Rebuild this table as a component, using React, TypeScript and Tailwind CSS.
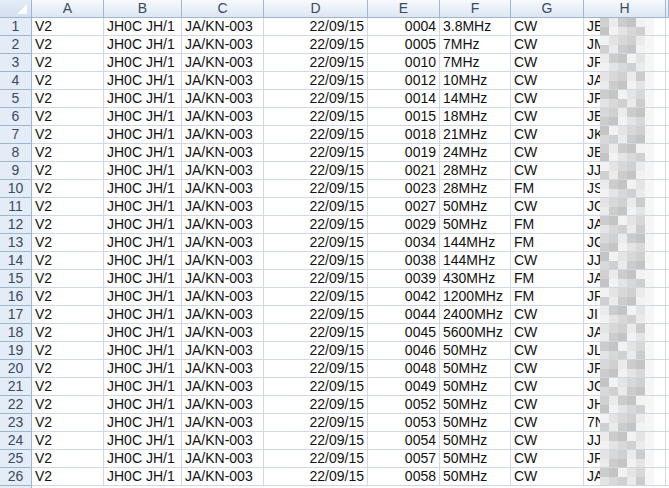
import React from 'react'

type Row = {
  no: string
  freq: string
  mode: string
  call: string
}

const rows: Row[] = [
  { no: '0004', freq: '3.8MHz', mode: 'CW', call: 'JE' },
  { no: '0005', freq: '7MHz', mode: 'CW', call: 'JM' },
  { no: '0010', freq: '7MHz', mode: 'CW', call: 'JR' },
  { no: '0012', freq: '10MHz', mode: 'CW', call: 'JA' },
  { no: '0014', freq: '14MHz', mode: 'CW', call: 'JF' },
  { no: '0015', freq: '18MHz', mode: 'CW', call: 'JE' },
  { no: '0018', freq: '21MHz', mode: 'CW', call: 'JK' },
  { no: '0019', freq: '24MHz', mode: 'CW', call: 'JE' },
  { no: '0021', freq: '28MHz', mode: 'CW', call: 'JJ' },
  { no: '0023', freq: '28MHz', mode: 'FM', call: 'JS' },
  { no: '0027', freq: '50MHz', mode: 'CW', call: 'JG' },
  { no: '0029', freq: '50MHz', mode: 'FM', call: 'JA' },
  { no: '0034', freq: '144MHz', mode: 'FM', call: 'JG' },
  { no: '0038', freq: '144MHz', mode: 'CW', call: 'JJ' },
  { no: '0039', freq: '430MHz', mode: 'FM', call: 'JA' },
  { no: '0042', freq: '1200MHz', mode: 'FM', call: 'JR' },
  { no: '0044', freq: '2400MHz', mode: 'CW', call: 'JI' },
  { no: '0045', freq: '5600MHz', mode: 'CW', call: 'JA' },
  { no: '0046', freq: '50MHz', mode: 'CW', call: 'JL' },
  { no: '0048', freq: '50MHz', mode: 'CW', call: 'JF' },
  { no: '0049', freq: '50MHz', mode: 'CW', call: 'JG' },
  { no: '0052', freq: '50MHz', mode: 'CW', call: 'JH' },
  { no: '0053', freq: '50MHz', mode: 'CW', call: '7N' },
  { no: '0054', freq: '50MHz', mode: 'CW', call: 'JJ' },
  { no: '0057', freq: '50MHz', mode: 'CW', call: 'JR' },
  { no: '0058', freq: '50MHz', mode: 'CW', call: 'JA' },
]

const letters = ['A', 'B', 'C', 'D', 'E', 'F', 'G', 'H', '']

// モザイク部分のグレー濃淡
const shades = ['#d0d0d0', '#e4e4e4', '#c4c4c4', '#ebebeb', '#d8d8d8', '#f2f2f2', '#cccccc']

const cols = 'grid grid-cols-[32px_72px_78px_82px_104px_72px_71px_73px_82px_1fr]'
const cell = 'h-[18px] border-r border-b border-[#d0d7e5] px-[3px] leading-[17px] whitespace-nowrap overflow-hidden text-[#111]'

function Mosaic({ seed }: { seed: number }) {
  return (
    <div className="absolute left-[16px] top-0 flex h-[18px] flex-col">
      {[0, 1].map((r) => (
        <div key={r} className="flex h-[9px]">
          {[0, 1, 2, 3, 4, 5].map((i) => (
            <div
              key={i}
              className="h-full w-[9px]"
              style={{
                backgroundColor: i === 5 ? '#f6f6f6' : shades[(seed * 5 + i * 3 + r * 2) % shades.length],
              }}
            />
          ))}
        </div>
      ))}
    </div>
  )
}

export default function App() {
  return (
    <div className="w-[669px] h-[488px] overflow-hidden bg-white text-[14px] text-black font-['Liberation_Sans','Noto_Sans_CJK_JP',sans-serif]">
      {/* 列見出し */}
      <div className={cols}>
        <div className="relative h-[18px] border-r border-b border-[#9eb6ce] bg-gradient-to-b from-[#e4ecf7] to-[#d3dff0]">
          <svg className="absolute right-[4px] bottom-[3px]" width="10" height="10" viewBox="0 0 10 10">
            <path d="M10 0 L10 10 L0 10 Z" fill="#ffffff" opacity="0.9" />
          </svg>
        </div>
        {letters.map((l, i) => (
          <div
            key={i}
            className="h-[18px] border-r border-b border-[#9eb6ce] bg-gradient-to-b from-[#f7f9fd] via-[#eaf0f8] to-[#dce6f4] text-center leading-[17px] text-[#3b4a5e]"
          >
            {l}
          </div>
        ))}
      </div>

      {rows.map((r, idx) => (
        <div key={idx} className={cols}>
          <div className="h-[18px] border-r border-b border-[#9eb6ce] bg-[#e4ecf7] text-center leading-[17px] text-[#3b4a5e]">
            {idx + 1}
          </div>
          <div className={cell}>V2</div>
          <div className={cell}>JH0C JH/1</div>
          <div className={cell}>JA/KN-003</div>
          <div className={`${cell} text-right`}>22/09/15</div>
          <div className={`${cell} text-right`}>{r.no}</div>
          <div className={cell}>{r.freq}</div>
          <div className={cell}>{r.mode}</div>
          <div className={`${cell} relative`}>
            {r.call}
            <Mosaic seed={idx} />
          </div>
          <div className={cell} />
        </div>
      ))}
      <div className={cols}>
        <div className="h-[18px] border-r border-[#9eb6ce] bg-[#e4ecf7]" />
      </div>
    </div>
  )
}
